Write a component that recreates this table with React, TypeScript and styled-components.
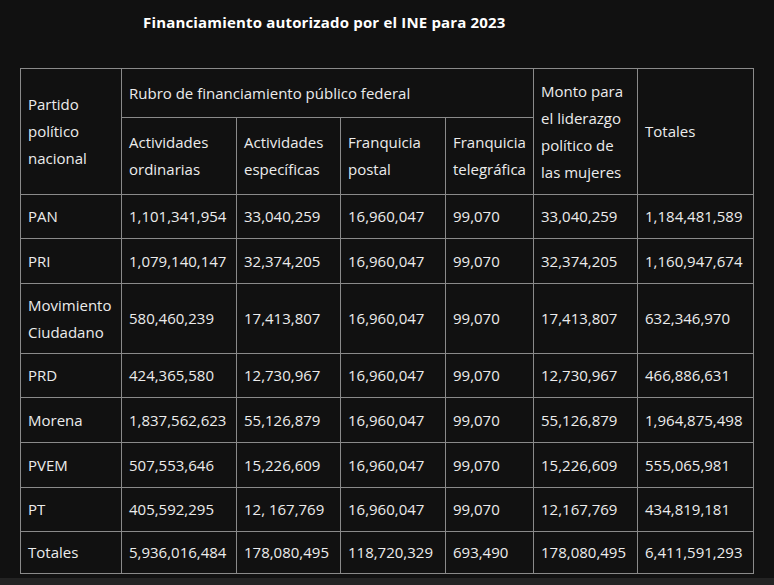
import React from "react";
import styled, { createGlobalStyle } from "styled-components";

const Global = createGlobalStyle`
  html, body { margin: 0; padding: 0; background: #111111; }
  body { font-family: "Open Sans", "Noto Sans", "DejaVu Sans", sans-serif; color: #ececec; }
`;

const Page = styled.div`
  width: 774px;
  height: 585px;
  background: #111111;
  display: flex;
  flex-direction: column;
  overflow: hidden;
`;

const Title = styled.h1`
  margin: 0;
  padding: 12px 0 0 143px;
  height: 56px;
  box-sizing: border-box;
  font-size: 15px;
  font-weight: 700;
  letter-spacing: 0.17px;
  color: #ffffff;
  line-height: 20px;
`;

const Wrap = styled.div`
  padding-left: 20px;
  padding-top: 12px;
  flex: 1;
`;

const Table = styled.table`
  border-collapse: collapse;
  table-layout: fixed;
  width: 734px;
  font-size: 15px;
  color: #ececec;
`;

const Cell = styled.td<{ $h?: number }>`
  border: 1px solid #8a8a8a;
  padding: 0 6px 0 7px;
  vertical-align: middle;
  text-align: left;
  line-height: 27px;
  font-weight: 400;
  white-space: nowrap;
  height: ${(p) => (p.$h ? `${p.$h}px` : "auto")};
  box-sizing: border-box;
`;

const HeadCell = styled(Cell).attrs({ as: "th" })`
  white-space: normal;
`;

const Row = styled.tr<{ $h: number }>`
  height: ${(p) => p.$h}px;
`;

const BottomBar = styled.div`
  height: 7px;
  background: #232323;
`;

const widths = [101, 115, 104, 105, 88, 104, 116];

const rows: [string, string[], number][] = [
  ["PAN", ["1,101,341,954", "33,040,259", "16,960,047", "99,070", "33,040,259", "1,184,481,589"], 44],
  ["PRI", ["1,079,140,147", "32,374,205", "16,960,047", "99,070", "32,374,205", "1,160,947,674"], 45],
  ["Movimiento Ciudadano", ["580,460,239", "17,413,807", "16,960,047", "99,070", "17,413,807", "632,346,970"], 70],
  ["PRD", ["424,365,580", "12,730,967", "16,960,047", "99,070", "12,730,967", "466,886,631"], 44],
  ["Morena", ["1,837,562,623", "55,126,879", "16,960,047", "99,070", "55,126,879", "1,964,875,498"], 45],
  ["PVEM", ["507,553,646", "15,226,609", "16,960,047", "99,070", "15,226,609", "555,065,981"], 45],
  ["PT", ["405,592,295", "12, 167,769", "16,960,047", "99,070", "12,167,769", "434,819,181"], 44],
  ["Totales", ["5,936,016,484", "178,080,495", "118,720,329", "693,490", "178,080,495", "6,411,591,293"], 42],
];

export default function App() {
  return (
    <>
      <Global />
      <Page>
        <Title>Financiamiento autorizado por el INE para 2023</Title>
        <Wrap>
          <Table>
            <colgroup>
              {widths.map((w, i) => (
                <col key={i} style={{ width: w }} />
              ))}
            </colgroup>
            <thead>
              <Row $h={49}>
                <HeadCell rowSpan={2}>
                  Partido<br />político<br />nacional
                </HeadCell>
                <HeadCell colSpan={4}>Rubro de financiamiento público federal</HeadCell>
                <HeadCell rowSpan={2}>
                  Monto para el liderazgo político de las mujeres
                </HeadCell>
                <HeadCell rowSpan={2}>Totales</HeadCell>
              </Row>
              <Row $h={77}>
                <HeadCell>Actividades ordinarias</HeadCell>
                <HeadCell>Actividades específicas</HeadCell>
                <HeadCell>Franquicia postal</HeadCell>
                <HeadCell>Franquicia telegráfica</HeadCell>
              </Row>
            </thead>
            <tbody>
              {rows.map(([name, vals, h]) => (
                <Row key={name} $h={h}>
                  <HeadCell as="td">
                    {name === "Movimiento Ciudadano" ? (
                      <>Movimiento<br />Ciudadano</>
                    ) : (
                      name
                    )}
                  </HeadCell>
                  {vals.map((v, i) => (
                    <Cell key={i}>{v}</Cell>
                  ))}
                </Row>
              ))}
            </tbody>
          </Table>
        </Wrap>
        <BottomBar />
      </Page>
    </>
  );
}
